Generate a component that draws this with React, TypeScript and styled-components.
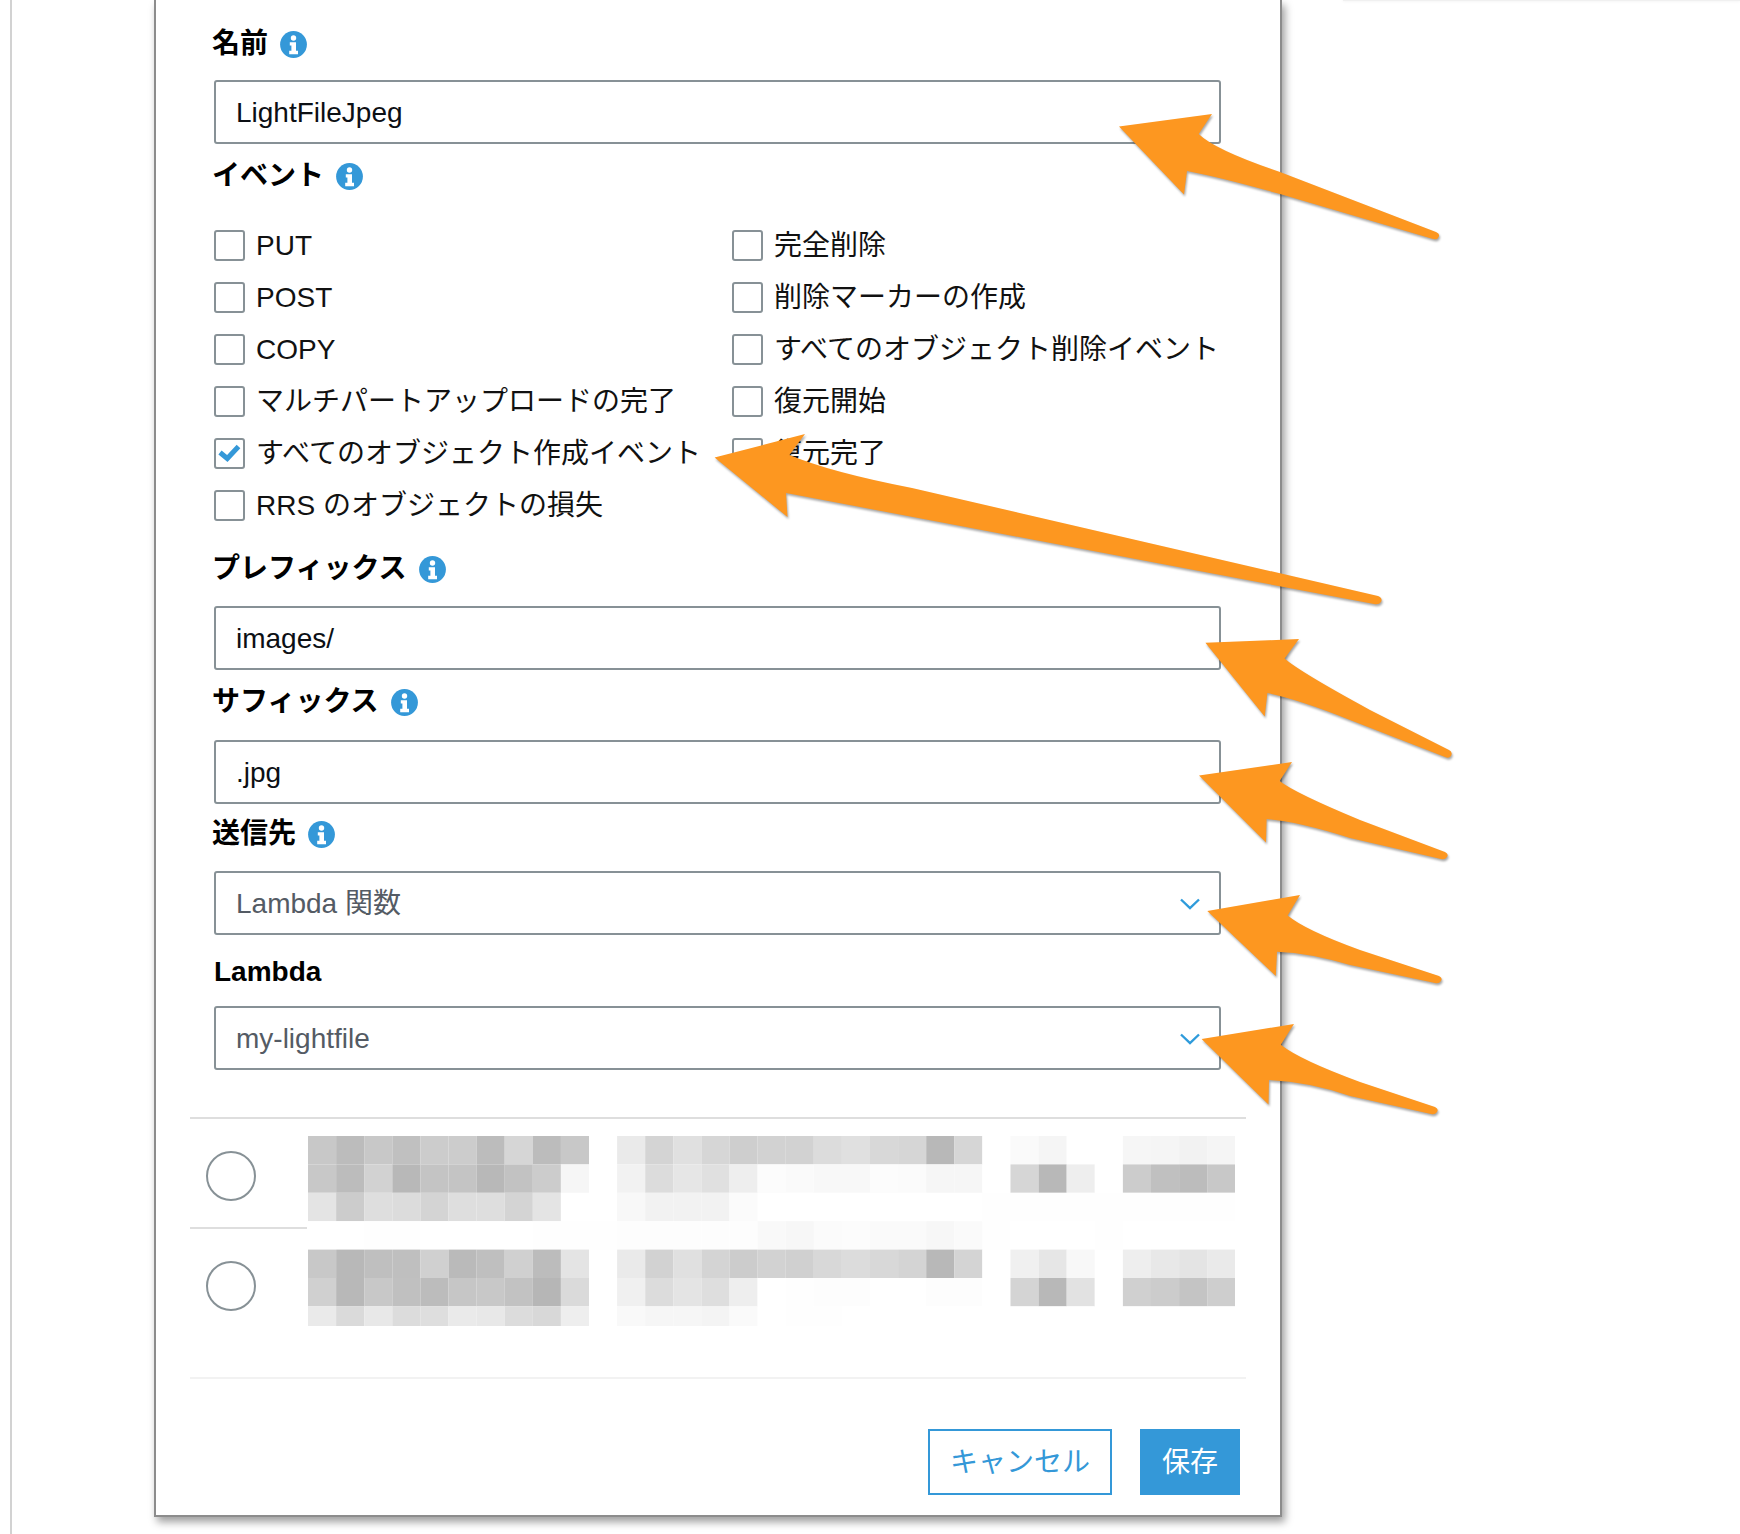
import React from "react";
import styled, { createGlobalStyle } from "styled-components";

const GlobalStyle = createGlobalStyle`
  html, body {
    margin: 0;
    padding: 0;
    background: #fff;
    overflow: hidden;
  }
  body {
    font-family: "Liberation Sans", "Noto Sans CJK JP", sans-serif;
    color: #16191f;
  }
`;

const Page = styled.div`
  position: relative;
  width: 1740px;
  height: 1534px;
  overflow: hidden;
`;

const Frame = styled.div`
  display: flex;
  align-items: flex-start;
  height: 1534px;
  margin-left: 10px;
  padding-left: 142px;
  border-left: 2px solid #d2d2d2;
  box-sizing: border-box;
`;

const Modal = styled.div`
  flex: none;
  width: 1128px;
  box-sizing: border-box;
  background: #fff;
  border: 2px solid #8c8c8c;
  border-top: 0;
  padding: 0 34px 20px;
  box-shadow: 3px 5px 8px rgba(0, 0, 0, 0.38);
`;

const SideCard = styled.div`
  flex: 1;
  height: 1px;
  margin-left: 61px;
  background: #f0f0f0;
  box-shadow: 0 0 3px rgba(0, 0, 0, 0.12);
`;

const Form = styled.div`
  padding: 25px 25px 0 24px;
`;

const Label = styled.div<{ $top?: number; $bottom?: number; $latin?: boolean }>`
  display: flex;
  align-items: center;
  gap: 12px;
  box-sizing: border-box;
  height: 38px;
  line-height: 36px;
  margin-top: ${(p) => p.$top ?? 0}px;
  margin-bottom: ${(p) => p.$bottom ?? 17}px;
  margin-left: ${(p) => (p.$latin ? 0 : -2)}px;
  font-size: 28px;
  font-weight: 700;
  color: #000;
`;

const InputBox = styled.div<{ $muted?: boolean }>`
  display: flex;
  align-items: center;
  justify-content: space-between;
  box-sizing: border-box;
  height: 64px;
  padding: 2px 19px 0 20px;
  border: 2px solid #879196;
  border-radius: 3px;
  font-size: 28px;
  line-height: 34px;
  color: ${(p) => (p.$muted ? "#545b64" : "#0c0f14")};
`;

const CheckGrid = styled.div`
  display: grid;
  grid-template-columns: 518px 1fr;
  grid-auto-flow: column;
  grid-template-rows: repeat(6, 30px);
  row-gap: 22px;
  margin-top: 36px;
`;

const CheckRow = styled.div`
  display: flex;
  align-items: center;
  gap: 11px;
  height: 30px;
  font-size: 28px;
  line-height: 30px;
  color: #111;
  white-space: nowrap;
`;

const Box = styled.div`
  flex: none;
  width: 31px;
  height: 31px;
  margin-top: -2px;
  box-sizing: border-box;
  border: 2px solid #879196;
  border-radius: 3px;
  background: #fff;
`;

const Targets = styled.div`
  display: flex;
  align-items: flex-start;
  margin-top: 47px;
  height: 262px;
  box-sizing: border-box;
  border-top: 2px solid #dedede;
  border-bottom: 2px solid #f2f2f2;
`;

const RadioColumn = styled.div`
  flex: none;
  width: 117px;
  margin-right: 1px;
`;

const RadioCell = styled.div<{ $divider?: boolean }>`
  box-sizing: border-box;
  height: 110px;
  padding: 32px 0 0 15.5px;
  border-bottom: ${(p) => (p.$divider ? "2px solid #dedede" : "0")};
`;

const Radio = styled.div`
  width: 50px;
  height: 50px;
  box-sizing: border-box;
  border: 2px solid #879196;
  border-radius: 50%;
`;

const Mosaic = styled.svg`
  display: block;
  flex: none;
  margin-top: 17px;
`;

const Footer = styled.div`
  display: flex;
  justify-content: flex-end;
  gap: 28px;
  padding: 50px 6px 0 0;
`;

const Button = styled.div<{ $primary?: boolean }>`
  display: flex;
  align-items: center;
  justify-content: center;
  height: 66px;
  padding: 2px 20px 0;
  box-sizing: border-box;
  border: 2px solid #3498d8;
  font-size: 28px;
  line-height: 34px;
  background: ${(p) => (p.$primary ? "#3498d8" : "#fff")};
  color: ${(p) => (p.$primary ? "#fff" : "#3498d8")};
`;

const Arrows = styled.svg`
  position: absolute;
  left: 0;
  top: 0;
  pointer-events: none;
  filter: drop-shadow(1px 2px 1px rgba(0, 0, 0, 0.35));
`;

const InfoIcon = () => (
  <svg width="27" height="27" viewBox="0 0 27 27">
    <circle cx="13.5" cy="13.5" r="13.4" fill="#3498d8" />
    <circle cx="13.5" cy="7" r="2.7" fill="#fff" />
    <path d="M9.8 11.2h6.2v8.6h2v3.4H9.2v-3.4h2.2v-5.2H9.8z" fill="#fff" />
  </svg>
);

const Chevron = () => (
  <svg width="20" height="12" viewBox="0 0 20 12">
    <path d="M1 1.5l9 8.5 9-8.5" fill="none" stroke="#2e9bdb" strokeWidth="2.4" />
  </svg>
);

const CheckMark = () => (
  <svg width="27" height="27" viewBox="0 0 27 27">
    <path d="M4 12.5L11.3 18.5L22.5 6.5" fill="none" stroke="#3498d8" strokeWidth="5" />
  </svg>
);

const leftEvents = [
  "PUT",
  "POST",
  "COPY",
  "マルチパートアップロードの完了",
  "すべてのオブジェクト作成イベント",
  "RRS のオブジェクトの損失",
];
const rightEvents = [
  "完全削除",
  "削除マーカーの作成",
  "すべてのオブジェクト削除イベント",
  "復元開始",
  "復元完了",
];

const arrowPaths = [
  "M1119 126.5L1212 114L1198.7 134Q1215 150 1280 172L1436 232Q1441 234 1438 238Q1437 240 1433 239L1280 194Q1215 176 1187 171L1184 194.5Z",
  "M714.6 457.5L805 434L789.5 455Q830 472 912 488L1378 596Q1383 598 1381 602Q1379 605 1374 604Q1050 543 786 493L787.5 517Z",
  "M1205.4 642.8L1299 639L1284.6 658.6Q1300 672 1370 710L1449 750Q1453 752 1451 756Q1449 759 1445 757L1350 720Q1300 700 1267.4 693L1264.7 716.5Z",
  "M1199 775.5L1292 762L1279.6 781Q1295 793 1360 820L1445 852Q1449 854 1447 857Q1445 860 1441 859L1350 838Q1300 822 1266.6 819L1266 842.4Z",
  "M1207.3 911L1300 895L1287.7 915.5Q1305 930 1360 950L1439 976Q1443 978 1441 981Q1439 984 1435 983L1350 965Q1310 953 1277 951.7L1275.8 975.9Z",
  "M1201.6 1039L1294 1024L1280.8 1044.8Q1300 1060 1360 1082L1435 1107Q1439 1109 1437 1112Q1435 1115 1431 1114L1350 1096Q1310 1082 1269 1080L1268.5 1104.5Z",
];

// redacted part of the screenshot, gray value per cell
const mosaicRows = [
  "c8 bc c8 c0 cc cc bc d6 bc c8 ff ea d4 e0 d6 ce d2 d2 dc e0 d8 d6 b8 d6 ff fa f5 ff ff f6 f5 f2 f5",
  "c8 bc d2 b8 c4 c4 b8 c2 cc f6 ff f2 dc e6 e0 ee fc fa f8 f8 fc fb f6 f6 ff d6 b8 ee ff cc c0 bc c8",
  "e4 cc de dc d4 de de d4 e4 ff ff f8 f2 f2 f2 fb ff ff ff ff ff ff ff ff fe fe fe fe fe fe fe fe fe",
  "ff ff fe fe ff ff ff ff fe fe fe fd fd fd fd fd f9 f7 fb fc fa fa f7 fa fe ff ff ff fe ff ff ff ff",
  "c8 b8 bf bf d0 ba bf d0 bc e4 ff ea d2 e0 d4 cc d2 d0 d8 dc d8 d4 b8 d4 ff f0 e6 f8 ff ee e8 e4 ea",
  "d0 b8 c8 c0 bc c6 c8 c2 b6 da ff f0 dc e4 de ee ff fe fd fd ff ff fd fd ff d4 b8 e2 ff d0 cc c4 ce",
  "ea da e8 dc de ea e8 dc d8 ee ff f9 f6 f6 f4 fa ff fe fe ff ff ff ff ff ff ff ff ff ff ff ff ff ff",
];
const CELL_W = 28.1;
const CELL_H = 28.4;

export default function App() {
  return (
    <Page>
      <GlobalStyle />
      <Frame>
        <Modal>
          <Form>
            <Label>
              名前 <InfoIcon />
            </Label>
            <InputBox>LightFileJpeg</InputBox>
            <Label $top={13} $bottom={0}>
              イベント <InfoIcon />
            </Label>
            <CheckGrid>
              {leftEvents.map((t) => (
                <CheckRow key={t}>
                  <Box>{t.startsWith("すべてのオブジェクト作成") && <CheckMark />}</Box>
                  {t}
                </CheckRow>
              ))}
              {rightEvents.map((t) => (
                <CheckRow key={t}>
                  <Box />
                  {t}
                </CheckRow>
              ))}
            </CheckGrid>
            <Label $top={29} $bottom={18}>
              プレフィックス <InfoIcon />
            </Label>
            <InputBox>images/</InputBox>
            <Label $top={13} $bottom={19}>
              サフィックス <InfoIcon />
            </Label>
            <InputBox>.jpg</InputBox>
            <Label $top={11} $bottom={18}>
              送信先 <InfoIcon />
            </Label>
            <InputBox $muted>
              Lambda 関数
              <Chevron />
            </InputBox>
            <Label $latin $top={18} $bottom={15}>
              Lambda
            </Label>
            <InputBox $muted>
              my-lightfile
              <Chevron />
            </InputBox>
          </Form>
          <Targets>
            <RadioColumn>
              <RadioCell $divider>
                <Radio />
              </RadioCell>
              <RadioCell>
                <Radio />
              </RadioCell>
            </RadioColumn>
            <Mosaic width={33 * CELL_W} height={6 * CELL_H + 20} viewBox={`0 0 ${33 * CELL_W} ${6 * CELL_H + 20}`}>
              {mosaicRows.map((row, r) =>
                row.split(" ").map((v, c) => (
                  <rect
                    key={`${r}-${c}`}
                    x={c * CELL_W}
                    y={r * CELL_H}
                    width={CELL_W}
                    height={r === 6 ? 20 : CELL_H}
                    fill={`#${v}${v}${v}`}
                  />
                ))
              )}
            </Mosaic>
          </Targets>
          <Footer>
            <Button>キャンセル</Button>
            <Button $primary>保存</Button>
          </Footer>
        </Modal>
        <SideCard />
      </Frame>
      <Arrows width="1740" height="1534" viewBox="0 0 1740 1534">
        {arrowPaths.map((d) => (
          <path key={d} d={d} fill="#fd9720" />
        ))}
      </Arrows>
    </Page>
  );
}
